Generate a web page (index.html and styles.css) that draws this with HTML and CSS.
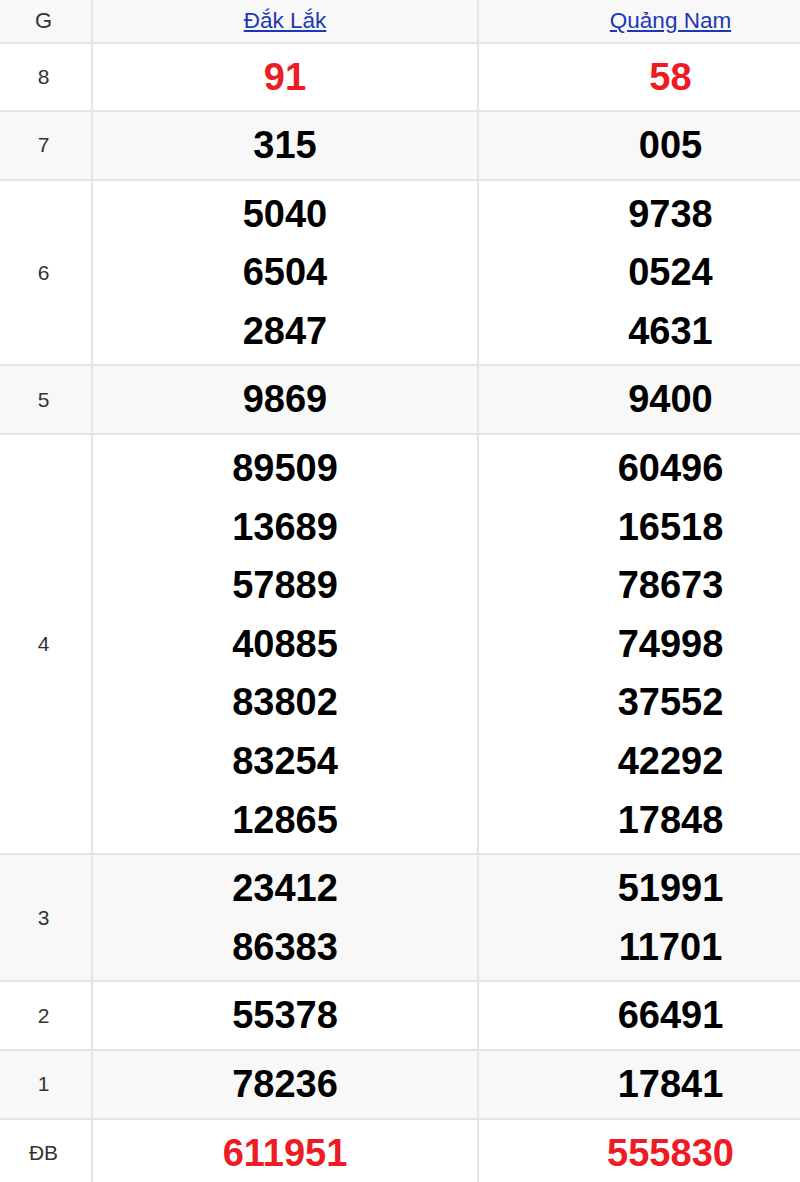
FILE: index.html
```html
<!DOCTYPE html>
<html lang="vi">
<head>
<meta charset="utf-8">
<title>Kết quả xổ số</title>
<link rel="stylesheet" href="styles.css">
</head>
<body>
<table class="kq">
  <thead>
    <tr class="alt">
      <th class="lbl">G</th>
      <th class="prov"><a href="#">Đắk Lắk</a></th>
      <th class="prov"><a href="#">Quảng Nam</a></th>
    </tr>
  </thead>
  <tbody>
    <tr>
      <td class="lbl">8</td>
      <td class="num red"><div>91</div></td>
      <td class="num red"><div>58</div></td>
    </tr>
    <tr class="alt">
      <td class="lbl">7</td>
      <td class="num"><div>315</div></td>
      <td class="num"><div>005</div></td>
    </tr>
    <tr>
      <td class="lbl">6</td>
      <td class="num"><div>5040</div><div>6504</div><div>2847</div></td>
      <td class="num"><div>9738</div><div>0524</div><div>4631</div></td>
    </tr>
    <tr class="alt">
      <td class="lbl">5</td>
      <td class="num"><div>9869</div></td>
      <td class="num"><div>9400</div></td>
    </tr>
    <tr>
      <td class="lbl">4</td>
      <td class="num"><div>89509</div><div>13689</div><div>57889</div><div>40885</div><div>83802</div><div>83254</div><div>12865</div></td>
      <td class="num"><div>60496</div><div>16518</div><div>78673</div><div>74998</div><div>37552</div><div>42292</div><div>17848</div></td>
    </tr>
    <tr class="alt">
      <td class="lbl">3</td>
      <td class="num"><div>23412</div><div>86383</div></td>
      <td class="num"><div>51991</div><div>11701</div></td>
    </tr>
    <tr>
      <td class="lbl">2</td>
      <td class="num"><div>55378</div></td>
      <td class="num"><div>66491</div></td>
    </tr>
    <tr class="alt">
      <td class="lbl">1</td>
      <td class="num"><div>78236</div></td>
      <td class="num"><div>17841</div></td>
    </tr>
    <tr>
      <td class="lbl">ĐB</td>
      <td class="num red"><div>611951</div></td>
      <td class="num red"><div>555830</div></td>
    </tr>
  </tbody>
</table>
</body>
</html>
```
FILE: styles.css
```css
html, body {
  margin: 0;
  padding: 0;
  background: #ffffff;
  overflow: hidden;
}

body {
  font-family: "Liberation Sans", Arial, sans-serif;
  color: #333333;
}

.kq {
  border-collapse: collapse;
  table-layout: fixed;
  width: 804px;
  margin-left: -4px;
}

.kq th,
.kq td {
  border: 2px solid #e3e3ea;
  border-top: none;
  text-align: center;
  vertical-align: middle;
  padding: 4px 0;
}

.kq tr > :first-child {
  border-left: none;
  width: 95px;
}

.kq tr > :nth-child(2) {
  width: 384px;
}

.kq tr > :nth-child(3) {
  border-right: none;
  padding-left: 62px;
}

.alt {
  background: #f8f8f8;
}

.lbl {
  font-size: 21px;
  font-weight: normal;
  color: #333333;
}

.kq th {
  font-weight: normal;
  font-size: 22px;
  line-height: 33.5px;
}

.prov a {
  color: #1c38b5;
  text-decoration: underline;
  font-size: 22.5px;
}

.num {
  font-size: 38px;
  font-weight: bold;
  color: #000000;
  line-height: 58.6px;
}

.num.red {
  color: #ec1b24;
}
```
